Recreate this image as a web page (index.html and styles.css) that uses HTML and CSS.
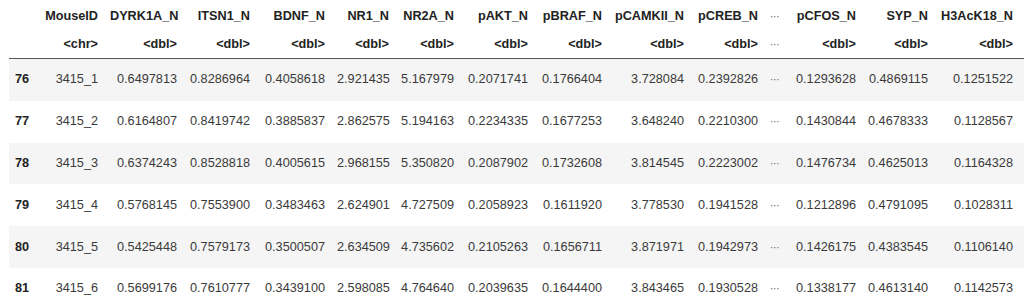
FILE: index.html
```html
<!DOCTYPE html>
<html>
<head>
<meta charset="utf-8">
<link rel="stylesheet" href="styles.css">
</head>
<body>
<table class="tbl">
  <colgroup>
    <col class="c-idx"><col class="c-id"><col class="c-dyrk"><col class="c-itsn"><col class="c-bdnf">
    <col class="c-nr1"><col class="c-nr2a"><col class="c-pakt"><col class="c-pbraf"><col class="c-pcam">
    <col class="c-pcreb"><col class="c-ell"><col class="c-pcfos"><col class="c-syp"><col class="c-h3">
  </colgroup>
  <thead>
    <tr class="names">
      <th></th><th>MouseID</th><th>DYRK1A_N</th><th>ITSN1_N</th><th>BDNF_N</th><th>NR1_N</th><th>NR2A_N</th><th>pAKT_N</th><th>pBRAF_N</th><th>pCAMKII_N</th><th>pCREB_N</th><th><span class="ell">⋯</span></th><th>pCFOS_N</th><th>SYP_N</th><th>H3AcK18_N</th>
    </tr>
    <tr class="types">
      <th></th><th>&lt;chr&gt;</th><th>&lt;dbl&gt;</th><th>&lt;dbl&gt;</th><th>&lt;dbl&gt;</th><th>&lt;dbl&gt;</th><th>&lt;dbl&gt;</th><th>&lt;dbl&gt;</th><th>&lt;dbl&gt;</th><th>&lt;dbl&gt;</th><th>&lt;dbl&gt;</th><th><span class="ell">⋯</span></th><th>&lt;dbl&gt;</th><th>&lt;dbl&gt;</th><th>&lt;dbl&gt;</th>
    </tr>
  </thead>
  <tbody>
    <tr><th class="idx">76</th><td>3415_1</td><td>0.6497813</td><td>0.8286964</td><td>0.4058618</td><td>2.921435</td><td>5.167979</td><td>0.2071741</td><td>0.1766404</td><td>3.728084</td><td>0.2392826</td><td><span class="ell">⋯</span></td><td>0.1293628</td><td>0.4869115</td><td>0.1251522</td></tr>
    <tr><th class="idx">77</th><td>3415_2</td><td>0.6164807</td><td>0.8419742</td><td>0.3885837</td><td>2.862575</td><td>5.194163</td><td>0.2234335</td><td>0.1677253</td><td>3.648240</td><td>0.2210300</td><td><span class="ell">⋯</span></td><td>0.1430844</td><td>0.4678333</td><td>0.1128567</td></tr>
    <tr><th class="idx">78</th><td>3415_3</td><td>0.6374243</td><td>0.8528818</td><td>0.4005615</td><td>2.968155</td><td>5.350820</td><td>0.2087902</td><td>0.1732608</td><td>3.814545</td><td>0.2223002</td><td><span class="ell">⋯</span></td><td>0.1476734</td><td>0.4625013</td><td>0.1164328</td></tr>
    <tr><th class="idx">79</th><td>3415_4</td><td>0.5768145</td><td>0.7553900</td><td>0.3483463</td><td>2.624901</td><td>4.727509</td><td>0.2058923</td><td>0.1611920</td><td>3.778530</td><td>0.1941528</td><td><span class="ell">⋯</span></td><td>0.1212896</td><td>0.4791095</td><td>0.1028311</td></tr>
    <tr><th class="idx">80</th><td>3415_5</td><td>0.5425448</td><td>0.7579173</td><td>0.3500507</td><td>2.634509</td><td>4.735602</td><td>0.2105263</td><td>0.1656711</td><td>3.871971</td><td>0.1942973</td><td><span class="ell">⋯</span></td><td>0.1426175</td><td>0.4383545</td><td>0.1106140</td></tr>
    <tr><th class="idx">81</th><td>3415_6</td><td>0.5699176</td><td>0.7610777</td><td>0.3439100</td><td>2.598085</td><td>4.764640</td><td>0.2039635</td><td>0.1644400</td><td>3.843465</td><td>0.1930528</td><td><span class="ell">⋯</span></td><td>0.1338177</td><td>0.4613140</td><td>0.1142573</td></tr>
  </tbody>
</table>
</body>
</html>
```
FILE: styles.css
```css
html, body {
  margin: 0;
  padding: 0;
  background: #ffffff;
}

body {
  font-family: "Liberation Sans", Arial, sans-serif;
  font-size: 12.7px;
  color: #3a3a3a;
  overflow: hidden;
}

.tbl {
  margin: 2px 0 0 9px;
  border-collapse: collapse;
  table-layout: fixed;
  width: 1015px;
}

.c-idx { width: 28px; }
.c-id { width: 67px; }
.c-dyrk { width: 79px; }
.c-itsn { width: 73px; }
.c-bdnf { width: 75px; }
.c-nr1 { width: 64px; }
.c-nr2a { width: 65px; }
.c-pakt { width: 74px; }
.c-pbraf { width: 74px; }
.c-pcam { width: 82px; }
.c-pcreb { width: 74px; }
.c-ell { width: 21px; }
.c-pcfos { width: 77px; }
.c-syp { width: 72px; }
.c-h3 { width: 90px; }

.tbl th,
.tbl td {
  text-align: right;
  vertical-align: middle;
  line-height: 15px;
  padding: 0 6px;
  white-space: nowrap;
  overflow: hidden;
}

.tbl th:last-child,
.tbl td:last-child {
  padding-right: 11px;
}

.tbl thead th {
  font-weight: bold;
  color: #222222;
  padding-top: 6.5px;
  padding-bottom: 6.5px;
}

.tbl thead tr.types th {
  border-bottom: 1px solid #555555;
}

.tbl tbody th,
.tbl tbody td {
  padding-top: 13.4px;
  padding-bottom: 13.4px;
}

.tbl tbody th.idx {
  text-align: left;
  font-weight: bold;
  color: #222222;
}

.tbl tbody tr:nth-child(odd) {
  background: #f5f5f5;
}

.ell {
  font-family: "DejaVu Sans", sans-serif;
  font-size: 10px;
  color: #666666;
  font-weight: normal;
}
```
